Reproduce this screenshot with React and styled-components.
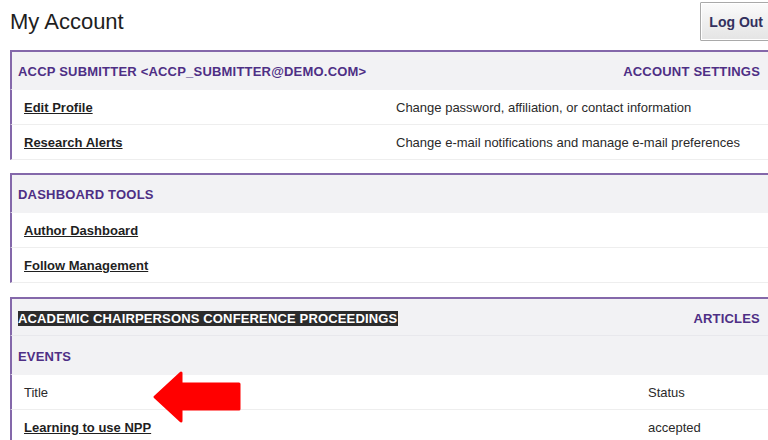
import React from 'react';
import styled, { createGlobalStyle } from 'styled-components';

const GlobalStyle = createGlobalStyle`
  html, body {
    margin: 0;
    padding: 0;
    background: #ffffff;
    overflow: hidden;
  }
  body {
    font-family: "Liberation Sans", Arial, sans-serif;
    color: #222;
  }
`;

const Page = styled.div`
  position: relative;
  width: 768px;
  height: 440px;
  overflow: hidden;
  padding-left: 10px;
  box-sizing: border-box;
`;

const TopBar = styled.div`
  display: flex;
  align-items: center;
  justify-content: space-between;
  height: 43px;
  margin-bottom: 7px;
`;

const Title = styled.h1`
  margin: 0;
  font-size: 22px;
  font-weight: normal;
  color: #1e1e1e;
`;

const LogOutButton = styled.button`
  margin-right: -6px;
  height: 39px;
  padding: 0 10px 0 8px;
  font-family: "Liberation Sans", Arial, sans-serif;
  font-size: 14px;
  font-weight: bold;
  color: #33305e;
  background: linear-gradient(#fbfbfb, #e4e4e4);
  border: 1px solid #a9a9a9;
  box-shadow: inset 0 0 0 1px #ffffff;
  border-radius: 1px;
`;

const Panel = styled.section`
  border-top: 2px solid #8468aa;
  margin-bottom: ${p => p.$gap || 13}px;
`;

const PanelHeader = styled.div`
  box-sizing: border-box;
  display: flex;
  align-items: center;
  justify-content: space-between;
  height: ${p => p.$h || 38}px;
  padding: 2px 8px 0 6px;
  background: #f2f2f4;
  border-left: 2px solid #8468aa;
  border-bottom: 1px solid ${p => (p.$line ? '#e8e8ec' : '#f2f2f4')};
  font-size: 13px;
  font-weight: bold;
  letter-spacing: 0.2px;
  color: #4e2f85;
  text-transform: uppercase;
`;

const SelectedText = styled.span`
  background: #2c2c2c;
  color: #ffffff;
  line-height: 15px;
  letter-spacing: 0.15px;
  padding-right: 1px;
`;

const Row = styled.div`
  display: grid;
  grid-template-columns: ${p => p.$cols || '372px 1fr'};
  align-items: center;
  height: 34px;
  padding-left: 12px;
  border-left: 2px solid #8468aa;
  border-bottom: 1px solid #eeeeee;
  font-size: 13px;
  color: #2a2a2a;
`;

const RowLink = styled.a`
  font-weight: bold;
  color: #1f1f1f;
  text-decoration: underline;
  cursor: pointer;
`;

const Arrow = styled.svg`
  position: absolute;
  left: 150px;
  top: 368px;
`;

export default function App() {
  return (
    <>
      <GlobalStyle />
      <Page>
        <TopBar>
          <Title>My Account</Title>
          <LogOutButton>Log Out</LogOutButton>
        </TopBar>

        <Panel>
          <PanelHeader>
            <span>ACCP Submitter &lt;accp_submitter@demo.com&gt;</span>
            <span>Account Settings</span>
          </PanelHeader>
          <Row>
            <span><RowLink>Edit Profile</RowLink></span>
            <span>Change password, affiliation, or contact information</span>
          </Row>
          <Row>
            <span><RowLink>Research Alerts</RowLink></span>
            <span>Change e-mail notifications and manage e-mail preferences</span>
          </Row>
        </Panel>

        <Panel $gap={14}>
          <PanelHeader>
            <span>Dashboard Tools</span>
          </PanelHeader>
          <Row>
            <span><RowLink>Author Dashboard</RowLink></span>
          </Row>
          <Row>
            <span><RowLink>Follow Management</RowLink></span>
          </Row>
        </Panel>

        <Panel>
          <PanelHeader $h={37} $line>
            <SelectedText>Academic Chairpersons Conference Proceedings</SelectedText>
            <span>Articles</span>
          </PanelHeader>
          <PanelHeader $h={39}>
            <span>Events</span>
          </PanelHeader>
          <Row $cols="624px 1fr">
            <span>Title</span>
            <span>Status</span>
          </Row>
          <Row $cols="624px 1fr">
            <span><RowLink>Learning to use NPP</RowLink></span>
            <span>accepted</span>
          </Row>
        </Panel>

        <Arrow width="96" height="58" viewBox="0 0 96 58">
          <polygon
            points="5,29 31,5 31,16 89,16 89,41 31,41 31,53"
            fill="#ff0000"
            stroke="#ff0000"
            strokeWidth="3"
            strokeLinejoin="round"
          />
        </Arrow>
      </Page>
    </>
  );
}
